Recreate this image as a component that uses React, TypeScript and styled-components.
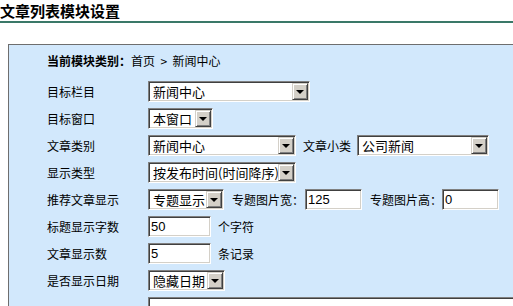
import React from 'react';
import styled, { createGlobalStyle } from 'styled-components';

const GlobalStyle = createGlobalStyle`
  html, body {
    margin: 0;
    padding: 0;
    overflow: hidden;
    background: #ffffff;
  }
  body {
    font-family: "Noto Sans CJK SC", "Noto Sans", sans-serif;
    font-size: 12px;
    color: #000;
  }
`;

const Page = styled.div`
  width: 513px;
  height: 306px;
  overflow: hidden;
`;

const Title = styled.div`
  height: 21px;
  line-height: 21px;
  font-size: 15px;
  font-weight: bold;
  border-bottom: 2px solid #3a7868;
  margin-bottom: 21px;
`;

const Panel = styled.div`
  margin-left: 8px;
  width: 620px;
  height: 300px;
  background: #d2e8fc;
  border: 1px solid #6e6e6e;
  border-right: none;
  border-bottom: none;
  padding: 8px 0 0 38px;
  box-sizing: border-box;
`;

const Crumb = styled.div`
  height: 16px;
  line-height: 16px;
  margin-bottom: 9px;
  white-space: pre;
  b {
    font-weight: bold;
  }
`;

const Row = styled.div`
  display: flex;
  align-items: center;
  height: 27px;
`;

const Label = styled.div`
  width: 101px;
  flex-shrink: 0;
`;

const Note = styled.span<{ $left?: number; $right?: number }>`
  margin: 0 ${({ $right }) => $right ?? 6}px 0 ${({ $left }) => $left ?? 7}px;
  white-space: nowrap;
`;

const SelectBox = styled.div<{ $w: number }>`
  position: relative;
  width: ${({ $w }) => $w}px;
  height: 21px;
  box-sizing: border-box;
  border: 1px solid;
  border-color: #808080 #ffffff #ffffff #808080;
  box-shadow: inset 1px 1px 0 #404040, inset -1px -1px 0 #d4d0c8;
  background: #fff;
  display: flex;
  align-items: center;
  font-size: 13px;
  padding-left: 4px;
  white-space: nowrap;
`;

const DropButton = styled.div`
  position: absolute;
  right: 1px;
  top: 1px;
  width: 16px;
  height: 17px;
  background: #d4d0c8;
  box-sizing: border-box;
  border: 1px solid;
  border-color: #d4d0c8 #404040 #404040 #d4d0c8;
  box-shadow: inset 1px 1px 0 #ffffff, inset -1px -1px 0 #808080;
  display: flex;
  align-items: center;
  justify-content: center;
  &::after {
    content: '';
    width: 0;
    height: 0;
    border-left: 4px solid transparent;
    border-right: 4px solid transparent;
    border-top: 4px solid #000;
    margin-top: 1px;
  }
`;

const TextBox = styled.div<{ $w: number }>`
  width: ${({ $w }) => $w}px;
  height: 21px;
  box-sizing: border-box;
  border: 1px solid;
  border-color: #808080 #ffffff #ffffff #808080;
  box-shadow: inset 1px 1px 0 #404040, inset -1px -1px 0 #d4d0c8;
  background: #fff;
  font-family: "Liberation Sans", Arial, sans-serif;
  font-size: 13px;
  line-height: 19px;
  padding-left: 2px;
`;

const TextArea = styled.div`
  width: 420px;
  height: 60px;
  margin-top: 3px;
  box-sizing: border-box;
  border: 1px solid;
  border-color: #808080 #ffffff #ffffff #808080;
  box-shadow: inset 1px 1px 0 #404040;
  background: #fff;
`;

const AreaRow = styled.div`
  display: flex;
  align-items: flex-start;
`;

function Select({ w, value }: { w: number; value: string }) {
  return (
    <SelectBox $w={w}>
      {value}
      <DropButton />
    </SelectBox>
  );
}

export default function App() {
  return (
    <Page>
      <GlobalStyle />
      <Title>文章列表模块设置</Title>
      <Panel>
        <Crumb>
          <b>当前模块类别：</b>首页  &gt;  新闻中心
        </Crumb>
        <Row>
          <Label>目标栏目</Label>
          <Select w={162} value="新闻中心" />
        </Row>
        <Row>
          <Label>目标窗口</Label>
          <Select w={65} value="本窗口" />
        </Row>
        <Row>
          <Label>文章类别</Label>
          <Select w={148} value="新闻中心" />
          <Note>文章小类</Note>
          <Select w={132} value="公司新闻" />
        </Row>
        <Row>
          <Label>显示类型</Label>
          <Select w={148} value="按发布时间(时间降序)" />
        </Row>
        <Row>
          <Label>推荐文章显示</Label>
          <Select w={76} value="专题显示" />
          <Note $left={8} $right={1}>专题图片宽：</Note>
          <TextBox $w={57}>125</TextBox>
          <Note $left={8} $right={0}>专题图片高：</Note>
          <TextBox $w={57}>0</TextBox>
        </Row>
        <Row>
          <Label>标题显示字数</Label>
          <TextBox $w={63}>50</TextBox>
          <Note>个字符</Note>
        </Row>
        <Row>
          <Label>文章显示数</Label>
          <TextBox $w={63}>5</TextBox>
          <Note>条记录</Note>
        </Row>
        <Row>
          <Label>是否显示日期</Label>
          <Select w={77} value="隐藏日期" />
        </Row>
        <AreaRow>
          <Label />
          <TextArea />
        </AreaRow>
      </Panel>
    </Page>
  );
}
